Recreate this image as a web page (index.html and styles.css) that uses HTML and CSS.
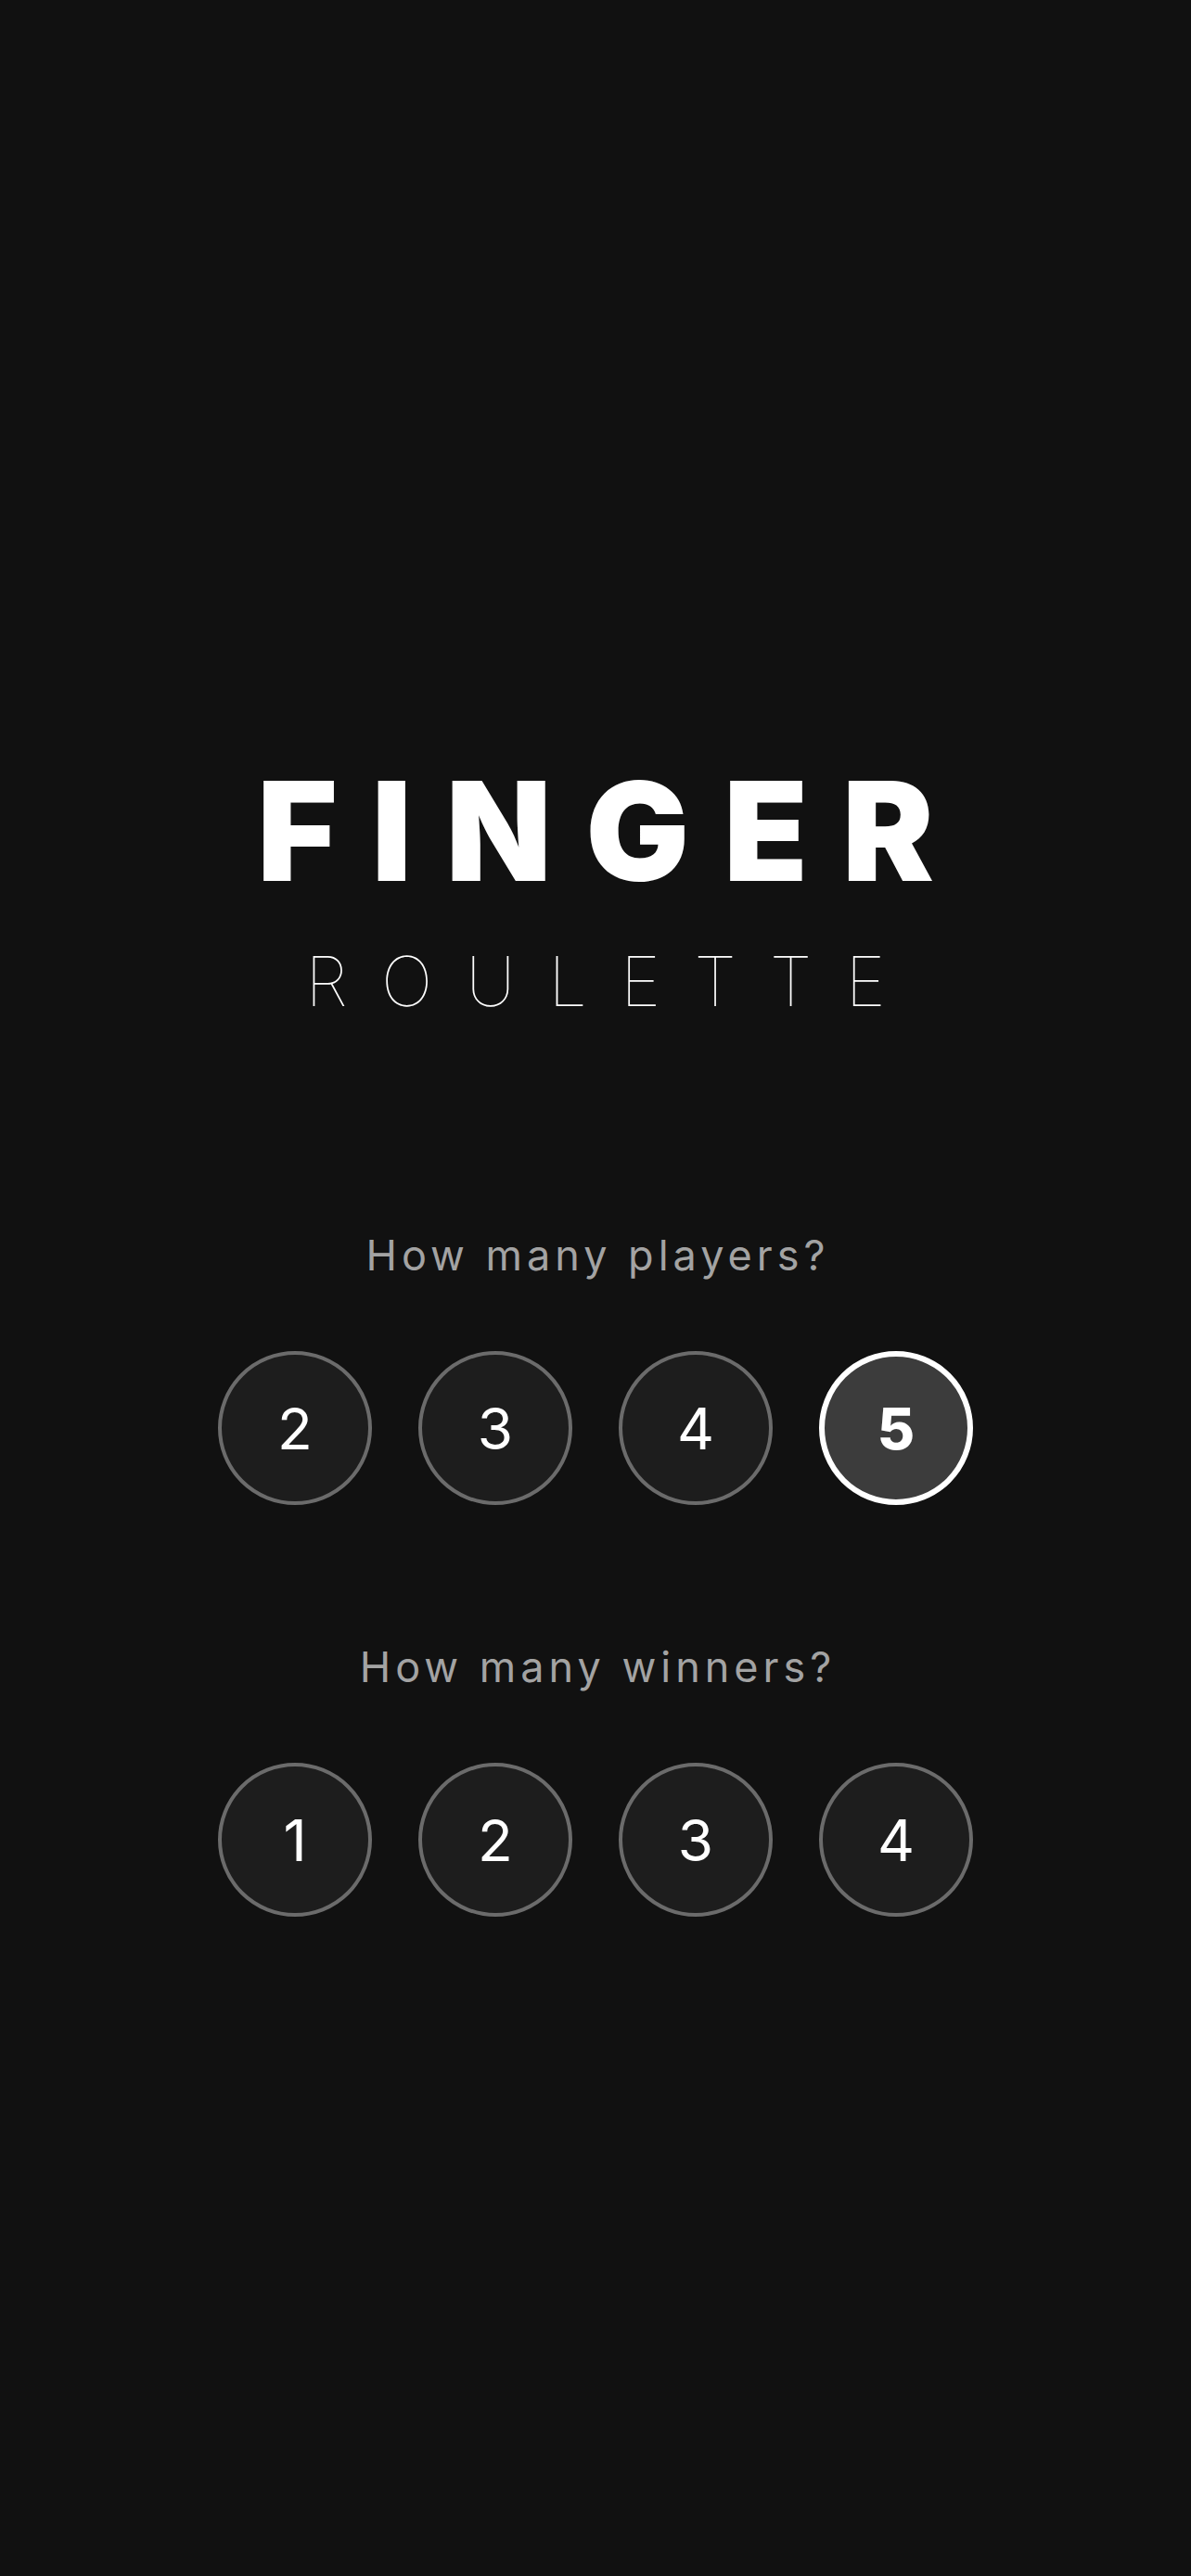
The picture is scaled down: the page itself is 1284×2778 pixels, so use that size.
FILE: index.html
```html
<!DOCTYPE html>
<html lang="en">
<head>
  <meta charset="UTF-8">
  <meta name="viewport" content="width=device-width, initial-scale=1.0">
  <title>Finger Roulette</title>
  <link rel="stylesheet" href="styles.css">
</head>
<body>
  <div class="screen">
    <div class="title">
      <h1 class="finger">FINGER</h1>
      <p class="roulette">ROULETTE</p>
    </div>

    <div class="picker players">
      <p class="question">How many players?</p>
      <div class="choices">
        <button class="choice">2</button>
        <button class="choice">3</button>
        <button class="choice">4</button>
        <button class="choice selected">5</button>
      </div>
    </div>

    <div class="picker winners">
      <p class="question">How many winners?</p>
      <div class="choices">
        <button class="choice">1</button>
        <button class="choice">2</button>
        <button class="choice">3</button>
        <button class="choice">4</button>
      </div>
    </div>
  </div>
</body>
</html>
```

FILE: styles.css
```css
body {
  margin: 0;
  padding: 0;
  background-color: #111111;
  font-family: Inter, "Noto Sans", sans-serif;
  color: #fff;
}

.screen {
  min-height: 2778px;
  display: flex;
  flex-direction: column;
  align-items: center;
  padding-top: 823px;
  box-sizing: border-box;
}

.title {
  display: flex;
  flex-direction: column;
  align-items: center;
}

.finger {
  margin: 0;
  font-size: 148px;
  line-height: 1;
  font-weight: 900;
  letter-spacing: 37px;
  padding-left: 37px;
}

.roulette {
  margin: 50px 0 0;
  font-size: 74px;
  line-height: 1;
  font-weight: 100;
  letter-spacing: 36px;
  padding-left: 36px;
}

.picker {
  display: flex;
  flex-direction: column;
  align-items: center;
}

.players {
  margin-top: 236px;
}

.winners {
  margin-top: 152px;
}

.question {
  margin: 0;
  font-size: 45px;
  line-height: 1;
  color: #a3a3a3;
  letter-spacing: 5px;
  padding-left: 5px;
}

.choices {
  display: flex;
  gap: 50px;
  margin-top: 81px;
}

.choice {
  width: 166px;
  height: 166px;
  border-radius: 50%;
  border: 4px solid #6b6b6b;
  background-color: #1d1d1d;
  color: #fff;
  font-family: Inter, "Noto Sans", sans-serif;
  font-size: 62px;
  font-weight: 400;
  padding: 0;
  display: flex;
  align-items: center;
  justify-content: center;
  cursor: pointer;
}

.choice.selected {
  border: 6px solid #fff;
  background-color: #3c3c3c;
  font-weight: 800;
}
```
